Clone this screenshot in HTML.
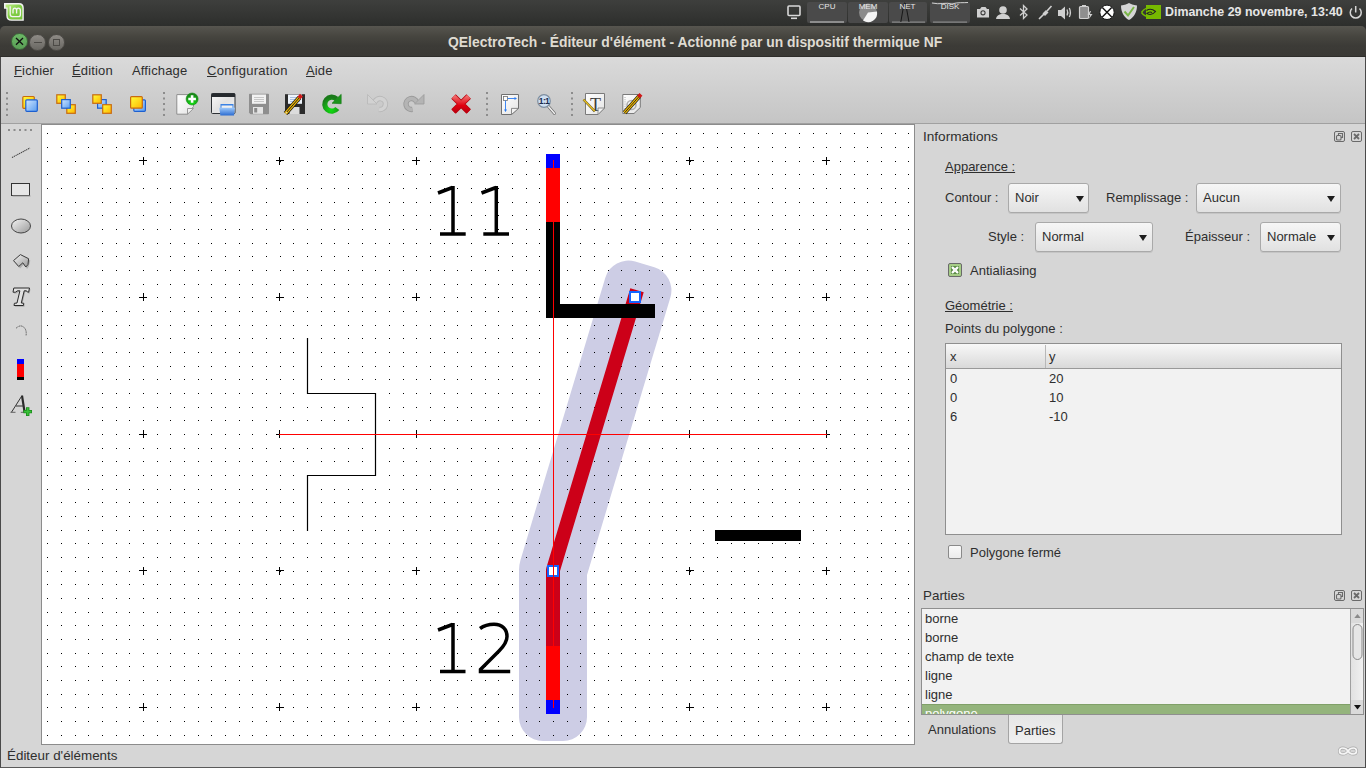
<!DOCTYPE html>
<html><head><meta charset="utf-8">
<style>
*{margin:0;padding:0;box-sizing:border-box}
html,body{width:1366px;height:768px;overflow:hidden;background:#2f2f2f;font-family:"Liberation Sans",sans-serif}
.a{position:absolute}
#panel{left:0;top:0;width:1366px;height:26px;background:linear-gradient(#3e3f3d,#2d2e2c)}
#win{left:0;top:50px;width:1366px;height:718px;background:#d6d6d6;border-left:1px solid #4a4a4a;border-right:1px solid #4a4a4a;border-bottom:1px solid #5a5a5a;border-radius:0}
#title{left:0;top:26px;width:1366px;height:31px;background:linear-gradient(#57554f,#46453f 35%,#3c3b37 65%,#3a3935);border-radius:5px 5px 0 0;border-bottom:1px solid #2e2d2a}
.wbtn{border-radius:50%;width:17px;height:17px;top:33px}
#ttext{left:448px;top:34.4px;font-weight:bold;font-size:13.9px;color:#dfdbd2;white-space:nowrap}
#menu{left:1px;top:57px;width:1364px;height:66px;background:linear-gradient(#dadada,#c5c5c5)}
.mi{top:63px;font-size:13px;color:#2e2e2e;white-space:nowrap;letter-spacing:0.15px}
#tb{display:none}
#tbline{left:1px;top:123px;width:1364px;height:1px;background:#a0a0a0}
.grip{width:2px;height:2px;background:#8a8a8a}
#ltb{left:1px;top:124px;width:40px;height:620px;background:#d6d6d6}
#cframe{left:41px;top:124px;width:874px;height:621px;border:1px solid #8c8c8c;background:#fff}
#dock{left:915px;top:124px;width:450px;height:620px;background:#d6d6d6}
.t{font-size:13px;color:#2e2e2e;white-space:nowrap}
.combo{height:30px;border:1px solid #a9a9a9;border-radius:3px;background:linear-gradient(#f6f6f6,#e1e1e1);box-shadow:0 1px 0 rgba(0,0,0,0.08)}
.combo span{position:absolute;left:6px;top:6px;font-size:13px;color:#2e2e2e}
.arr{position:absolute;width:0;height:0;border-left:4.5px solid transparent;border-right:4.5px solid transparent;border-top:6px solid #1e1e1e;top:12px}
.dbtn{width:11px;height:11px;border:1.5px solid #6a6a6a;border-radius:2px}
#status{left:7px;top:748px;font-size:13.4px;color:#2e2e2e}
</style></head><body>
<div id="panel" class="a"></div>
<!-- mint logo -->
<svg class="a" style="left:0;top:0" width="28" height="26" viewBox="0 0 28 26">
<defs><linearGradient id="mg" x1="0" y1="0" x2="1" y2="1"><stop offset="0" stop-color="#c4f08a"/><stop offset="0.45" stop-color="#86d04a"/><stop offset="1" stop-color="#74c03a"/></linearGradient></defs>
<path d="M4 3H19Q23.8 3 23.8 8V20.8H11.5Q6.3 20.8 6.3 15.5V8.8H4Z" fill="#f2f2f2"/>
<path d="M5.6 4.5H18.8Q22.4 4.5 22.4 8.3V19.5H11.7Q7.6 19.5 7.6 15.4V7.4H5.6Z" fill="url(#mg)"/>
<path d="M10.2 6.2V14.3Q10.2 16.6 12.4 16.6H18.3Q20.4 16.6 20.4 14.4V10.5Q20.4 8.2 18.4 8.2Q16.6 8.2 16.6 10.5V13.6M16.6 10.5Q16.6 8.2 14.8 8.2Q13 8.2 13 10.5V13.6" fill="none" stroke="#f4f4f4" stroke-width="1.3"/>
</svg>
<!-- tray -->
<svg class="a" style="left:780px;top:0" width="586" height="26" viewBox="780 0 586 26">
<g fill="none" stroke="#d8d8d8" stroke-width="1.6">
<rect x="788" y="6" width="12" height="9.5" rx="1"/>
</g>
<rect x="791" y="17.5" width="6" height="1.6" fill="#d8d8d8"/>
<rect x="807" y="2" width="40" height="21" rx="2" fill="#4a4a4a"/>
<rect x="848" y="2" width="40" height="21" rx="2" fill="#4a4a4a"/>
<rect x="889" y="2" width="38" height="21" rx="2" fill="#4a4a4a"/>
<rect x="930" y="2" width="40" height="21" rx="2" fill="#4a4a4a"/>
<rect x="810" y="21.5" width="34" height="1" fill="#cfcfcf"/>
<circle cx="868" cy="12.5" r="9" fill="#8a8a8a"/>
<path d="M868 12.5L877 11.5A9 9 0 0 1 863 20.5Z" fill="#f4f4f4"/>
<rect x="892" y="21.5" width="33" height="1.2" fill="#8a8a8a"/>
<path d="M900.8 22L904 3.5Q904.8 2.5 905.6 3.5L909 22" fill="none" stroke="#111" stroke-width="0.9"/>
<rect x="933" y="21.5" width="34" height="1.2" fill="#8a8a8a"/>
<path d="M932 3C940 5 946 2 952 4C958 2 963 3 968 2.5" fill="none" stroke="#e0e0e0" stroke-width="0.9"/>
<g font-family="Liberation Sans" font-size="8" fill="#e8e8e8" text-anchor="middle">
<text x="827" y="9">CPU</text><text x="868" y="9">MEM</text><text x="907.5" y="9">NET</text><text x="950" y="9">DISK</text>
</g>
<!-- camera -->
<path d="M977 9h3l1.5-2h4l1.5 2h2v8.5h-12z" fill="#d0d0d0"/><circle cx="983" cy="12.8" r="2.6" fill="#3a3a3a"/><circle cx="983" cy="12.8" r="1.5" fill="#d0d0d0"/>
<!-- person -->
<circle cx="1003" cy="10" r="3.8" fill="#d0d0d0"/><path d="M996 19C996.5 15.5 999 14 1003 14C1007 14 1009.5 15.5 1010 19Z" fill="#d0d0d0"/>
<!-- bluetooth -->
<path d="M1020 8.5L1027 15L1023.5 18.5V5.5L1027 9L1020 15.5" fill="none" stroke="#d0d0d0" stroke-width="1.3"/>
<!-- plug -->
<path d="M1039 19L1044 14M1047 11L1051.5 6" stroke="#d0d0d0" stroke-width="1.6"/><path d="M1042.5 13.5l3.5-3.5 2.5 2.5-3.5 3.5z" fill="#d0d0d0"/>
<!-- volume -->
<path d="M1058 10h3l4-3.5v13l-4-3.5h-3z" fill="#d0d0d0"/><path d="M1067 9.5Q1068.5 12.5 1067 15.5M1069.3 8Q1071.5 12.5 1069.3 17" fill="none" stroke="#d0d0d0" stroke-width="1.3"/>
<!-- battery -->
<rect x="1079.5" y="6.5" width="9" height="12" rx="1" fill="#8e8e8e" stroke="#d0d0d0" stroke-width="1.2"/><rect x="1082" y="5" width="4" height="1.6" fill="#d0d0d0"/>
<path d="M1090 11l-2.5 4h2.5l-1 4 3.5-5h-2.5l1-3z" fill="#d0d0d0"/>
<!-- x circle -->
<circle cx="1107" cy="12.3" r="7.2" fill="#fff" stroke="#111" stroke-width="1"/>
<path d="M1102.3 7.6L1111.7 17M1111.7 7.6L1102.3 17" stroke="#111" stroke-width="1.4"/>
<!-- shield -->
<path d="M1121 5.5C1125 5 1127 4 1129 3C1131 4 1133 5 1137 5.5C1137 12 1134 17.5 1129 20C1124 17.5 1121 12 1121 5.5Z" fill="#d6d6d6"/>
<path d="M1124.5 11.5L1128 15.5L1134 7" fill="none" stroke="#7ab648" stroke-width="2"/>
<!-- nvidia -->
<rect x="1146" y="5" width="15" height="14" fill="#76b900"/>
<path d="M1141.5 12.5C1144 8.5 1148.5 7.2 1152 8.2" fill="none" stroke="#76b900" stroke-width="1.5"/>
<path d="M1141.5 12.5C1144 16 1148 17 1151 16.5" fill="none" stroke="#76b900" stroke-width="1.5"/>
<path d="M1146.5 10.5C1149 8.8 1152.5 9 1155.5 11.5C1153 14.5 1149.5 15 1147 13.5C1148.5 12 1150.5 11.8 1152 12.5" fill="none" stroke="#222" stroke-width="1.1"/>
<!-- power -->
<path d="M1352 8.5A5.5 5.5 0 1 0 1359.5 8.5" fill="none" stroke="#d6d6d6" stroke-width="1.5"/><path d="M1355.7 6V12.5" stroke="#d6d6d6" stroke-width="1.5"/>
</svg>
<div class="a" style="left:1165px;top:5px;font-weight:bold;font-size:12.4px;color:#e6e6e6;white-space:nowrap">Dimanche 29 novembre, 13:40</div>

<div id="win" class="a"></div>
<div id="title" class="a"></div>
<div class="a wbtn" style="left:11px;background:linear-gradient(#6cb866,#5a9e56);border:1px solid #3e6a3b"></div>
<svg class="a" style="left:14px;top:36px" width="11" height="11"><path d="M2 2L9 8.8M9 2L2 8.8" stroke="#111" stroke-width="1.3"/></svg>
<div class="a wbtn" style="left:29.4px;top:33.5px;width:17px;height:17px;background:linear-gradient(#8e8b86,#696762);border:1px solid #4e4c48"></div>
<div class="a" style="left:34.3px;top:41.5px;width:7.4px;height:1.6px;background:#4c4a46"></div>
<div class="a wbtn" style="left:48.4px;top:33.5px;width:17px;height:17px;background:linear-gradient(#8e8b86,#696762);border:1px solid #4e4c48"></div>
<div class="a" style="left:53.3px;top:39px;width:7.2px;height:6.5px;border:1.7px solid #4c4a46"></div>
<div id="ttext" class="a">QElectroTech - Éditeur d'élément - Actionné par un dispositif thermique NF</div>

<div id="menu" class="a"></div>
<div class="a mi" style="left:14px"><u>F</u>ichier</div>
<div class="a mi" style="left:72px"><u>É</u>dition</div>
<div class="a mi" style="left:132px">Afficha<u>g</u>e</div>
<div class="a mi" style="left:207px;letter-spacing:0.27px"><u>C</u>onfiguration</div>
<div class="a mi" style="left:306px"><u>A</u>ide</div>

<div id="tb" class="a"></div>
<div id="tbline" class="a"></div>
<svg class="a" style="left:0;top:86px" width="660" height="37" viewBox="0 86 660 37">
<defs>
<linearGradient id="gy" x1="0" y1="0" x2="1" y2="1"><stop offset="0" stop-color="#ffff3a"/><stop offset="1" stop-color="#ffb400"/></linearGradient>
<linearGradient id="gb" x1="0" y1="0" x2="1" y2="1"><stop offset="0" stop-color="#cfe6ff"/><stop offset="1" stop-color="#5a9df0"/></linearGradient>
<radialGradient id="gg" cx="0.5" cy="0.9" r="0.9"><stop offset="0" stop-color="#10e010"/><stop offset="1" stop-color="#1a7a1a"/></radialGradient>
<linearGradient id="gp" x1="0" y1="0" x2="1" y2="1"><stop offset="0" stop-color="#ffffff"/><stop offset="1" stop-color="#e4e4e4"/></linearGradient>
<linearGradient id="gw" x1="0" y1="0" x2="1" y2="1"><stop offset="0" stop-color="#fafafa"/><stop offset="0.5" stop-color="#e2e2e2"/><stop offset="1" stop-color="#f4f4f4"/></linearGradient>
<linearGradient id="gf" x1="0" y1="0" x2="0" y2="1"><stop offset="0" stop-color="#9cc8fa"/><stop offset="1" stop-color="#2a6ad0"/></linearGradient>
<linearGradient id="gr" x1="0" y1="0" x2="0" y2="1"><stop offset="0" stop-color="#f06a6a"/><stop offset="0.6" stop-color="#e00010"/><stop offset="1" stop-color="#c00010"/></linearGradient>
</defs>
<g fill="#8c8c8c">
<rect x="6" y="92" width="2" height="2"/><rect x="6" y="97.5" width="2" height="2"/><rect x="6" y="103" width="2" height="2"/><rect x="6" y="108.5" width="2" height="2"/><rect x="6" y="114" width="2" height="2"/>
<rect x="163" y="92" width="2" height="2"/><rect x="163" y="97.5" width="2" height="2"/><rect x="163" y="103" width="2" height="2"/><rect x="163" y="108.5" width="2" height="2"/><rect x="163" y="114" width="2" height="2"/>
<rect x="486" y="92" width="2" height="2"/><rect x="486" y="97.5" width="2" height="2"/><rect x="486" y="103" width="2" height="2"/><rect x="486" y="108.5" width="2" height="2"/><rect x="486" y="114" width="2" height="2"/>
<rect x="571" y="92" width="2" height="2"/><rect x="571" y="97.5" width="2" height="2"/><rect x="571" y="103" width="2" height="2"/><rect x="571" y="108.5" width="2" height="2"/><rect x="571" y="114" width="2" height="2"/>
</g>
<!-- icon1 -->
<rect x="22.8" y="96.5" width="11.5" height="11.8" rx="1" fill="url(#gy)" stroke="#c86a10" stroke-width="1.2"/>
<rect x="25.8" y="99.8" width="11.5" height="11.5" rx="1" fill="url(#gb)" stroke="#1c5fd0" stroke-width="1.2"/>
<!-- icon2 -->
<rect x="56.8" y="94.8" width="8.5" height="8.5" fill="url(#gy)" stroke="#c86a10" stroke-width="1.2"/>
<rect x="66.8" y="104.7" width="8.5" height="8.6" fill="url(#gy)" stroke="#c86a10" stroke-width="1.2"/>
<rect x="61.7" y="99.6" width="8.6" height="8.6" fill="url(#gb)" stroke="#1c5fd0" stroke-width="1.2"/>
<!-- icon3 -->
<rect x="97.6" y="99.6" width="8.6" height="8.6" fill="url(#gb)" stroke="#1c5fd0" stroke-width="1.2"/>
<rect x="92.8" y="94.8" width="8.5" height="8.5" fill="url(#gy)" stroke="#c86a10" stroke-width="1.2"/>
<rect x="102.7" y="104.7" width="8.6" height="8.6" fill="url(#gy)" stroke="#c86a10" stroke-width="1.2"/>
<!-- icon4 -->
<rect x="133.8" y="99.8" width="11.6" height="11.5" rx="1" fill="url(#gb)" stroke="#1c5fd0" stroke-width="1.2"/>
<rect x="130.6" y="96.6" width="11.7" height="11.6" rx="1" fill="url(#gy)" stroke="#c86a10" stroke-width="1.2"/>
<!-- new -->
<path d="M176.8 94.6H193.5V106.5L187.5 114.2H176.8Z" fill="url(#gp)" stroke="#8e8e8e" stroke-width="1"/>
<path d="M187.5 114.2V108.5H193.5Z" fill="#f0f0f0" stroke="#8e8e8e" stroke-width="0.9"/>
<circle cx="192.1" cy="99" r="6" fill="url(#gg)" stroke="#0d8a0d" stroke-width="0.6"/>
<path d="M192.1 95.2V102.8M188.3 99H195.9" stroke="#fff" stroke-width="2.6"/>
<!-- open window -->
<rect x="211.5" y="93.5" width="23.5" height="20" rx="1" fill="url(#gw)" stroke="#2e3236" stroke-width="1"/>
<rect x="211.5" y="93.5" width="23.5" height="3.5" fill="#262a2e"/>
<path d="M220.5 104H233.5V110H220.5Z" fill="#3a82e4"/>
<rect x="221.5" y="105.5" width="11" height="2.5" fill="#f0f0f0"/>
<path d="M219.3 107.8H235L234 115.6H220.3Z" fill="url(#gf)"/>
<!-- save grey -->
<path d="M249.5 94.2H268.5V113.8H250.5L249.5 112.8Z" fill="#8e8e8e" stroke="#7a7a7a" stroke-width="0.6"/>
<rect x="252" y="94.5" width="14" height="9.3" fill="#f2f2f2"/>
<path d="M254 97.5H264M254 99.5H264M254 101.5H264" stroke="#b4b4b4" stroke-width="0.7"/>
<rect x="253" y="107" width="10" height="6.8" fill="#e4e4e4"/>
<rect x="254.2" y="108" width="3" height="4.5" fill="#8a8a8a"/>
<!-- save as -->
<path d="M285 94.2H305V114H285Z" fill="#2c2c2c"/>
<rect x="288" y="94.5" width="14" height="9.3" fill="#eef4fb"/>
<path d="M290 97.5H300M290 99.5H300M290 101.5H300" stroke="#9ab4d8" stroke-width="0.8"/>
<rect x="289.5" y="107" width="10" height="7" fill="#dcdcdc"/>
<path d="M285.5 113.5L299.5 97.5" stroke="#1a1a1a" stroke-width="4.6"/>
<path d="M285.5 113.5L299.5 97.5" stroke="#f0b800" stroke-width="3.2"/>
<path d="M285.5 113.5L299.5 97.5" stroke="#222" stroke-width="1"/>
<path d="M299 98L301.5 95.2" stroke="#d01818" stroke-width="4"/>
<path d="M284 115L286.5 111.5L287.5 112.5Z" fill="#e8d8a0"/>
<!-- reload -->
<path d="M337.3 108.5A7 7 0 1 1 336.5 99" fill="none" stroke="url(#gg)" stroke-width="5.2"/>
<path d="M332 103.3L341.2 103.7L341.2 94.3Z" fill="#1c941c" stroke="#137813" stroke-width="0.6"/>
<!-- undo disabled -->
<path d="M374.8 102.1A5.5 5.5 0 1 1 379 109.4" fill="none" stroke="#b8b8b8" stroke-width="5.4"/>
<path d="M374.8 102.1A5.5 5.5 0 1 1 379 109.4" fill="none" stroke="#d2d2d2" stroke-width="3.6"/>
<path d="M367.5 94.5V104H377Z" fill="#d2d2d2" stroke="#b8b8b8" stroke-width="0.8"/>
<!-- redo disabled -->
<path d="M416.7 102.1A5.5 5.5 0 1 0 412.5 109.4" fill="none" stroke="#9a9a9a" stroke-width="5.4"/>
<path d="M416.7 102.1A5.5 5.5 0 1 0 412.5 109.4" fill="none" stroke="#b4b4b4" stroke-width="3.6"/>
<path d="M424 94.5V104H414.5Z" fill="#b4b4b4" stroke="#9a9a9a" stroke-width="0.8"/>
<!-- red x -->
<path d="M453.5 96.5L468.7 111.5M468.7 96.5L453.5 111.5" stroke="#b8000c" stroke-width="6.4"/>
<path d="M453.5 96.5L468.7 111.5M468.7 96.5L453.5 111.5" stroke="url(#gr)" stroke-width="4.6"/>
<!-- page axes -->
<path d="M501.5 94.5H518.5V108.4L511.5 114.5H501.5Z" fill="url(#gp)" stroke="#707070" stroke-width="1"/>
<path d="M511.5 114.5V108.4H518.5Z" fill="#f2f2f2" stroke="#707070" stroke-width="0.8"/>
<rect x="503.5" y="96.5" width="4" height="4" fill="#fff" stroke="#707070" stroke-width="0.8"/>
<path d="M507.5 98.5H515.5M505.5 100.5V110" stroke="#2a7af0" stroke-width="0.9"/>
<path d="M517 98.5L514.5 97V100Z M505.5 112L504 109.5H507Z" fill="#2a7af0"/>
<!-- zoom 1:1 -->
<path d="M548.5 106.5L554.5 113.5" stroke="#6e6e6e" stroke-width="2.8" stroke-linecap="round"/>
<path d="M548.5 106.5L554.5 113.5" stroke="#f0f0f0" stroke-width="1.4" stroke-linecap="round"/>
<circle cx="544" cy="101" r="6.3" fill="#cfe0f2" stroke="#7e8ea0" stroke-width="1.2"/>
<text x="544" y="104.3" font-family="Liberation Sans" font-size="8.5" font-weight="bold" text-anchor="middle" fill="#1c2c50" letter-spacing="-0.6">1:1</text>
<!-- T page -->
<path d="M585.5 93.5H604.5V108L598 114.5H585.5Z" fill="url(#gp)" stroke="#7a7a7a" stroke-width="1"/>
<path d="M598 114.5V108H604.5Z" fill="#f2f2f2" stroke="#7a7a7a" stroke-width="0.8"/>
<text x="595.5" y="110.5" font-family="Liberation Serif" font-size="18" text-anchor="middle" fill="#3c3c3c">T</text>
<path d="M583.5 99.5L594.8 111.3" stroke="#5a5030" stroke-width="2.4"/>
<path d="M583.5 99.5L594.8 111.3" stroke="#e8c020" stroke-width="1.4"/>
<!-- pencil page -->
<path d="M622.8 94.5H640.3V107.5L634 113.5H622.8Z" fill="url(#gp)" stroke="#7a7a7a" stroke-width="1"/>
<path d="M625 97V112" stroke="#9a9a9a" stroke-width="0.8" stroke-dasharray="1 1.2"/>
<circle cx="631.5" cy="105" r="4.5" fill="none" stroke="#b0b0b0" stroke-width="1.6"/>
<path d="M624.5 112.8L639.5 96" stroke="#1a1a1a" stroke-width="4.4"/>
<path d="M624.5 112.8L639.5 96" stroke="#f0b800" stroke-width="3"/>
<path d="M624.5 112.8L639.5 96" stroke="#222" stroke-width="0.9"/>
<path d="M638.5 97L641 94.3" stroke="#d01818" stroke-width="4"/>
</svg>

<div id="ltb" class="a"></div>
<svg class="a" style="left:0;top:124px" width="42" height="300" viewBox="0 124 42 300">
<defs>
<linearGradient id="lg1" x1="0" y1="0" x2="1" y2="1"><stop offset="0" stop-color="#f4f4f4"/><stop offset="1" stop-color="#9a9a9a"/></linearGradient>
</defs>
<g fill="#8c8c8c"><rect x="8" y="129" width="2" height="2"/><rect x="13.5" y="129" width="2" height="2"/><rect x="19" y="129" width="2" height="2"/><rect x="24.5" y="129" width="2" height="2"/><rect x="30" y="129" width="2" height="2"/></g>
<path d="M12 157.5L30 148" stroke="#444" stroke-width="1.1" stroke-dasharray="1.3 0.7"/>
<rect x="11.5" y="183.5" width="18" height="12" fill="#e6e6e6" stroke="#333" stroke-width="1"/>
<rect x="12.5" y="195.5" width="18" height="1" fill="#9a9a9a"/>
<ellipse cx="21" cy="226" rx="9.5" ry="7" fill="url(#lg1)" stroke="#444" stroke-width="1"/>
<path d="M14.5 261.5L21.2 255.8L29.5 259.5L28 265.5L26.3 268L23 263.5L19.3 267.5Z" fill="#6a6a6a" opacity="0.35" transform="translate(0.8,1)"/><path d="M13.5 260.6L20.4 254.6L28.6 258.7L28 264.5L25.8 267L22.8 262.8L18.7 266.5Z" fill="url(#lg1)" stroke="#3a3a3a" stroke-width="1"/>
<path d="M13.8 288H29.5L28.6 292.2H27.6L26.5 290.8H24.2L21.3 303L23.8 303.3L23.4 305.5H14L14.4 303.3L17 303L19.9 290.8H17.5L15.4 292.2H13Z" fill="#777" opacity="0.45" transform="translate(1,1.2)"/><path d="M13.8 288H29.5L28.6 292.2H27.6L26.5 290.8H24.2L21.3 303L23.8 303.3L23.4 305.5H14L14.4 303.3L17 303L19.9 290.8H17.5L15.4 292.2H13Z" fill="#e2e2e2" stroke="#2a2a2a" stroke-width="1"/>
<path d="M16 328.3Q21 323.5 25 328.5Q26.8 331.5 26 336" fill="none" stroke="#555" stroke-width="1" stroke-dasharray="1.2 0.6"/>
<rect x="17" y="359" width="7" height="5" fill="#0000ff"/>
<rect x="17" y="364" width="7" height="13" fill="#ff0000"/>
<rect x="17" y="377" width="7" height="3" fill="#000"/>
<path d="M11.5 412.2L22 395.6" stroke="#333" stroke-width="1"/>
<path d="M22 395.6L24.6 412.2" stroke="#2a2a2a" stroke-width="2.2"/>
<path d="M16 406H24" stroke="#333" stroke-width="1"/>
<path d="M10.5 412.3H15.5M20.8 412.3H25.5" stroke="#555" stroke-width="0.9"/>
<path d="M27.7 407.3V415.9M23.4 411.6H32" stroke="#1a8a1a" stroke-width="3.4"/>
<path d="M27.7 408V415.2M24.1 411.6H31.3" stroke="#38c038" stroke-width="1.8"/>
</svg>

<div id="cframe" class="a"></div>

<svg width="1366" height="768" viewBox="0 0 1366 768" style="position:absolute;left:0;top:0">
<defs>
<pattern id="grid" x="20" y="24" width="41" height="41" patternUnits="userSpaceOnUse">
<path d="M0 0h1v1h-1zM14 0h1v1h-1zM27 0h1v1h-1zM0 14h1v1h-1zM14 14h1v1h-1zM27 14h1v1h-1zM0 27h1v1h-1zM14 27h1v1h-1zM27 27h1v1h-1z" fill="#000"/>
</pattern>
<clipPath id="cv"><rect x="42" y="125" width="872" height="619"/></clipPath>
</defs>
<g clip-path="url(#cv)">
<rect x="42" y="125" width="872" height="619" fill="#fff"/>
<path d="M519 717L519 570A34 34 0 0 1 520.44 560.22L605.31 277.64A24 24 0 0 1 635.20 261.56L654.36 267.31A24 24 0 0 1 670.44 297.20L587.00 575.00L587 717A24 24 0 0 1 563 741L543 741A24 24 0 0 1 519 717Z" fill="#cdcde5"/>
<rect x="42" y="125" width="872" height="619" fill="url(#grid)"/>
<path d="M139 160h8v1h-8zM143 157h1v8h-1zM139 297h8v1h-8zM143 293h1v8h-1zM139 434h8v1h-8zM143 430h1v8h-1zM139 570h8v1h-8zM143 567h1v8h-1zM139 707h8v1h-8zM143 703h1v8h-1zM276 160h8v1h-8zM279 157h1v8h-1zM276 297h8v1h-8zM279 293h1v8h-1zM276 434h8v1h-8zM279 430h1v8h-1zM276 570h8v1h-8zM279 567h1v8h-1zM276 707h8v1h-8zM279 703h1v8h-1zM412 160h8v1h-8zM416 157h1v8h-1zM412 297h8v1h-8zM416 293h1v8h-1zM412 434h8v1h-8zM416 430h1v8h-1zM412 570h8v1h-8zM416 567h1v8h-1zM412 707h8v1h-8zM416 703h1v8h-1zM549 160h8v1h-8zM553 157h1v8h-1zM549 297h8v1h-8zM553 293h1v8h-1zM549 434h8v1h-8zM553 430h1v8h-1zM549 570h8v1h-8zM553 567h1v8h-1zM549 707h8v1h-8zM553 703h1v8h-1zM686 160h8v1h-8zM689 157h1v8h-1zM686 297h8v1h-8zM689 293h1v8h-1zM686 434h8v1h-8zM689 430h1v8h-1zM686 570h8v1h-8zM689 567h1v8h-1zM686 707h8v1h-8zM689 703h1v8h-1zM822 160h8v1h-8zM826 157h1v8h-1zM822 297h8v1h-8zM826 293h1v8h-1zM822 434h8v1h-8zM826 430h1v8h-1zM822 570h8v1h-8zM826 567h1v8h-1zM822 707h8v1h-8zM826 703h1v8h-1z" fill="#000" shape-rendering="crispEdges"/>
<!-- left symbol -->
<path d="M307.5 338V393.5H375.5V475.5H307.5V531" fill="none" stroke="#000" stroke-width="1.2"/>
<rect x="715" y="530" width="86" height="11" fill="#000"/>
<!-- polygon -->
<path d="M553 707L553 570L635 297" fill="none" stroke="#cc0018" stroke-width="14" stroke-linecap="square" stroke-linejoin="bevel"/>
<!-- black L -->
<path d="M546 222h14v82h95v14h-109z" fill="#000"/>
<!-- top terminal -->
<rect x="546" y="154" width="14" height="14" fill="#0000ff"/>
<rect x="546" y="168" width="14" height="54" fill="#ff0000"/>
<!-- bottom terminal -->
<rect x="546" y="646" width="14" height="54" fill="#ff0000"/>
<rect x="546" y="700" width="14" height="14" fill="#0000ff"/>
<!-- handles -->
<rect x="630" y="292" width="10" height="10" fill="#fff" stroke="#1464ff" stroke-width="2"/>
<rect x="548" y="566" width="10" height="10" fill="#fff" stroke="#1464ff" stroke-width="2"/>
<!-- axes -->
<rect x="279" y="434" width="548" height="1" fill="#ff0000"/>
<rect x="553" y="160" width="1" height="548" fill="#ff0000"/>
<!-- texts 11 / 12 -->
<g fill="none" stroke="#000" stroke-width="3.5">
<path d="M438 193L452.5 187.5M453 186V234M440 234H465.7"/>
<path d="M481.5 193L496 187.5M496.3 186V234M483.3 234H509"/>
<path d="M438 630L452.5 624.5M453 623V671.5M440 671.5H465.5"/>
<path d="M480 628.5C484 625.5 489 624.2 494 624.2C502.5 624.2 507 629.5 507 636.5C507 641.5 504.5 645.5 499 651L480.5 669.5V671.5H510.2"/>
</g>
</g>
</svg>

<div id="dock" class="a"></div>
<div class="a t" style="left:923px;top:129px;font-size:13.6px">Informations</div>
<div class="a dbtn" style="left:1334px;top:131px"></div>
<svg class="a" style="left:1334px;top:131px" width="11" height="11"><rect x="2.5" y="4.5" width="4.5" height="4.5" rx="1" fill="none" stroke="#6a6a6a" stroke-width="1.1"/><path d="M4.5 4.5V2.5H8.5V6.5H7" fill="none" stroke="#6a6a6a" stroke-width="1.1"/></svg>
<div class="a dbtn" style="left:1351px;top:131px"></div>
<svg class="a" style="left:1351px;top:131px" width="11" height="11"><path d="M3 3L8 8M8 3L3 8" stroke="#6a6a6a" stroke-width="1.8"/></svg>

<div class="a t" style="left:945px;top:159px;text-decoration:underline">Apparence :</div>
<div class="a t" style="left:945px;top:190px">Contour :</div>
<div class="a combo" style="left:1008px;top:183px;width:81px"><span>Noir</span><i class="arr" style="left:67px"></i></div>
<div class="a t" style="left:1106px;top:190px">Remplissage :</div>
<div class="a combo" style="left:1196px;top:183px;width:145px"><span>Aucun</span><i class="arr" style="left:130px"></i></div>
<div class="a t" style="left:988px;top:229px">Style :</div>
<div class="a combo" style="left:1035px;top:222px;width:118px"><span>Normal</span><i class="arr" style="left:103px"></i></div>
<div class="a t" style="left:1185px;top:229px">Épaisseur :</div>
<div class="a combo" style="left:1260px;top:222px;width:81px"><span>Normale</span><i class="arr" style="left:66px"></i></div>

<div class="a" style="left:948px;top:263px;width:14px;height:14px;border:1px solid #6a6a6a;border-radius:2px;background:#a6cd86"></div>
<svg class="a" style="left:948px;top:263px" width="14" height="14"><rect x="3" y="3" width="8" height="8" fill="#5b8c46"/><path d="M4.6 4.6L9.4 9.4M9.4 4.6L4.6 9.4" stroke="#fff" stroke-width="2.2" stroke-linecap="round"/><rect x="5.5" y="5.5" width="3" height="3" fill="#f4f4f4"/></svg>
<div class="a t" style="left:970px;top:263px">Antialiasing</div>

<div class="a t" style="left:945px;top:298px;text-decoration:underline">Géométrie :</div>
<div class="a t" style="left:945px;top:321px">Points du polygone :</div>

<div class="a" style="left:945px;top:343px;width:397px;height:192px;border:1px solid #8f8f8f;background:#f2f2f2"></div>
<div class="a" style="left:946px;top:344px;width:395px;height:25px;background:linear-gradient(#f8f8f8,#d9d9d9);border-bottom:1px solid #999"></div>
<div class="a" style="left:1045px;top:345px;width:1px;height:23px;background:#b8b8b8"></div>
<div class="a t" style="left:950px;top:349px">x</div>
<div class="a t" style="left:1049px;top:349px">y</div>
<div class="a t" style="left:950px;top:371px">0</div><div class="a t" style="left:1049px;top:371px">20</div>
<div class="a t" style="left:950px;top:390px">0</div><div class="a t" style="left:1049px;top:390px">10</div>
<div class="a t" style="left:950px;top:409px">6</div><div class="a t" style="left:1049px;top:409px">-10</div>

<div class="a" style="left:948px;top:545px;width:14px;height:14px;border:1px solid #8a8a8a;border-radius:2px;background:linear-gradient(#fafafa,#ececec)"></div>
<div class="a t" style="left:970px;top:545px">Polygone fermé</div>

<div class="a t" style="left:923px;top:588px;font-size:13.4px">Parties</div>
<div class="a dbtn" style="left:1334px;top:590px"></div>
<svg class="a" style="left:1334px;top:590px" width="11" height="11"><rect x="2.5" y="4.5" width="4.5" height="4.5" rx="1" fill="none" stroke="#6a6a6a" stroke-width="1.1"/><path d="M4.5 4.5V2.5H8.5V6.5H7" fill="none" stroke="#6a6a6a" stroke-width="1.1"/></svg>
<div class="a dbtn" style="left:1351px;top:590px"></div>
<svg class="a" style="left:1351px;top:590px" width="11" height="11"><path d="M3 3L8 8M8 3L3 8" stroke="#6a6a6a" stroke-width="1.8"/></svg>

<div class="a" style="left:921px;top:608px;width:443px;height:107px;border:1px solid #8f8f8f;background:#f2f2f2;overflow:hidden">
<div class="a t" style="left:3px;top:1.5px">borne</div>
<div class="a t" style="left:3px;top:20.5px">borne</div>
<div class="a t" style="left:3px;top:39.5px">champ de texte</div>
<div class="a t" style="left:3px;top:58.5px">ligne</div>
<div class="a t" style="left:3px;top:77.5px">ligne</div>
<div class="a" style="left:0;top:95px;width:428px;height:12px;background:#94b47c;border-top:1px solid #80a068"></div>
<div class="a t" style="left:3px;top:96.5px;color:#fff">polygone</div>
<div class="a" style="left:428px;top:0;width:14px;height:106px;background:linear-gradient(90deg,#e2e2e2,#f2f2f2);border-left:1px solid #a0a0a0"></div>
<div class="a" style="left:429px;top:0;width:13px;height:14px;background:#dadada"></div>
<div class="a" style="left:429px;top:91px;width:13px;height:15px;background:#dadada"></div>
<svg class="a" style="left:429px;top:0" width="13" height="106"><path d="M3.3 9L6.5 5L9.7 9Z" fill="#8a8a8a"/><rect x="2" y="15.5" width="9" height="35" rx="4.5" fill="#e6e6e6" stroke="#8a8a8a" stroke-width="1"/><path d="M3 96L6.5 100.5L10 96Z" fill="#111"/></svg>
</div>

<div class="a" style="left:1008px;top:715px;width:55px;height:29px;border:1px solid #a4a4a4;border-top:none;border-radius:0 0 3px 3px;background:linear-gradient(#e6e6e6,#f0f0f0)"></div>
<div class="a t" style="left:928px;top:722px">Annulations</div>
<div class="a t" style="left:1015px;top:723px">Parties</div>
<svg class="a" style="left:1336px;top:742px" width="26" height="18"><path d="M12 9C9.5 5 3.5 5 3.5 9C3.5 13 9.5 13 12 9C14.5 5 20.5 5 20.5 9C20.5 13 14.5 13 12 9Z" fill="none" stroke="#a8a8a8" stroke-width="3"/><path d="M12 9C9.5 5 3.5 5 3.5 9C3.5 13 9.5 13 12 9C14.5 5 20.5 5 20.5 9C20.5 13 14.5 13 12 9Z" fill="none" stroke="#f6f6f6" stroke-width="1.7"/></svg>

<div id="status" class="a">Éditeur d'éléments</div>
</body></html>
